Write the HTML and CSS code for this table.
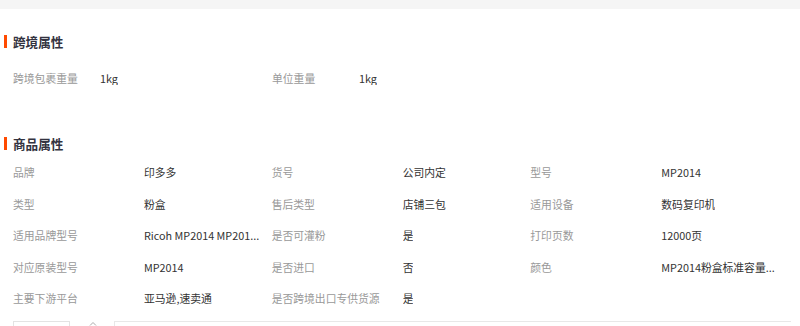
FILE: index.html
```html
<!DOCTYPE html>
<html lang="zh-CN">
<head>
<meta charset="utf-8">
<title>商品属性</title>
<link rel="stylesheet" href="styles.css">
</head>
<body>
<div class="topbar"></div>

<section class="block block-cross">
  <h2 class="title">跨境属性</h2>
  <div class="grid grid-cross">
    <div class="item"><span class="label">跨境包裹重量</span><span class="value">1kg</span></div>
    <div class="item"><span class="label">单位重量</span><span class="value">1kg</span></div>
  </div>
</section>

<section class="block block-goods">
  <h2 class="title">商品属性</h2>
  <div class="grid grid-goods">
    <div class="item"><span class="label">品牌</span><span class="value">印多多</span></div>
    <div class="item"><span class="label">货号</span><span class="value">公司内定</span></div>
    <div class="item"><span class="label">型号</span><span class="value">MP2014</span></div>

    <div class="item"><span class="label">类型</span><span class="value">粉盒</span></div>
    <div class="item"><span class="label">售后类型</span><span class="value">店铺三包</span></div>
    <div class="item"><span class="label">适用设备</span><span class="value">数码复印机</span></div>

    <div class="item"><span class="label">适用品牌型号</span><span class="value">Ricoh MP2014 MP201...</span></div>
    <div class="item"><span class="label">是否可灌粉</span><span class="value">是</span></div>
    <div class="item"><span class="label">打印页数</span><span class="value">12000页</span></div>

    <div class="item"><span class="label">对应原装型号</span><span class="value">MP2014</span></div>
    <div class="item"><span class="label">是否进口</span><span class="value">否</span></div>
    <div class="item"><span class="label">颜色</span><span class="value">MP2014粉盒标准容量...</span></div>

    <div class="item"><span class="label">主要下游平台</span><span class="value">亚马逊,速卖通</span></div>
    <div class="item"><span class="label">是否跨境出口专供货源</span><span class="value">是</span></div>
  </div>
</section>

<div class="footer">
  <div class="tab-box"></div>
  <svg class="caret" width="8" height="5" viewBox="0 0 8 5" aria-hidden="true"><path d="M1 4.5 L4 1.5 L7 4.5" fill="none" stroke="#aaaaaa" stroke-width="1"/></svg>
  <div class="tab-wide"></div>
</div>
</body>
</html>
```

FILE: styles.css
```css
html, body {
  margin: 0;
  padding: 0;
  background: #ffffff;
  overflow: hidden;
}

body {
  width: 800px;
  height: 326px;
  font-family: "Noto Sans CJK SC", "Microsoft YaHei", sans-serif;
  color: #333333;
}

.topbar {
  height: 9px;
  background: #f5f5f5;
}

.title {
  margin: 0 0 0 4px;
  padding-left: 6px;
  border-left: 3px solid #ff4a00;
  font-size: 12.6px;
  line-height: 13px;
  font-weight: bold;
  color: #333340;
}

.block-cross .title {
  margin-top: 26px;
}

.block-goods .title {
  margin-top: 43px;
}

.grid {
  display: grid;
  margin-left: 13px;
  width: 776px;
  grid-template-columns: repeat(3, 1fr);
}

.grid-cross {
  margin-top: 14px;
  grid-template-columns: 259px 259px 1fr;
}

.grid-goods {
  margin-top: 7px;
}

.item {
  display: flex;
  height: 31.5px;
  align-items: center;
  font-size: 10.8px;
  line-height: 14px;
}

.label {
  flex: 0 0 131px;
  color: #999999;
  white-space: nowrap;
}

.grid-cross .label {
  flex-basis: 87px;
}

.value {
  max-width: 122px;
  color: #333333;
  white-space: nowrap;
  overflow: hidden;
  text-overflow: ellipsis;
}

.footer {
  display: flex;
  align-items: flex-start;
  margin-top: 7px;
  padding-left: 13px;
}

.tab-box {
  width: 55px;
  height: 10px;
  border: 1px solid #e3e3e3;
  border-bottom: 0;
}

.caret {
  margin-left: 19px;
  margin-right: 17px;
  margin-top: 0;
}

.tab-wide {
  width: 676px;
  height: 10px;
  border-top: 1px solid #e8e8e8;
  border-left: 1px solid #e8e8e8;
}
```
